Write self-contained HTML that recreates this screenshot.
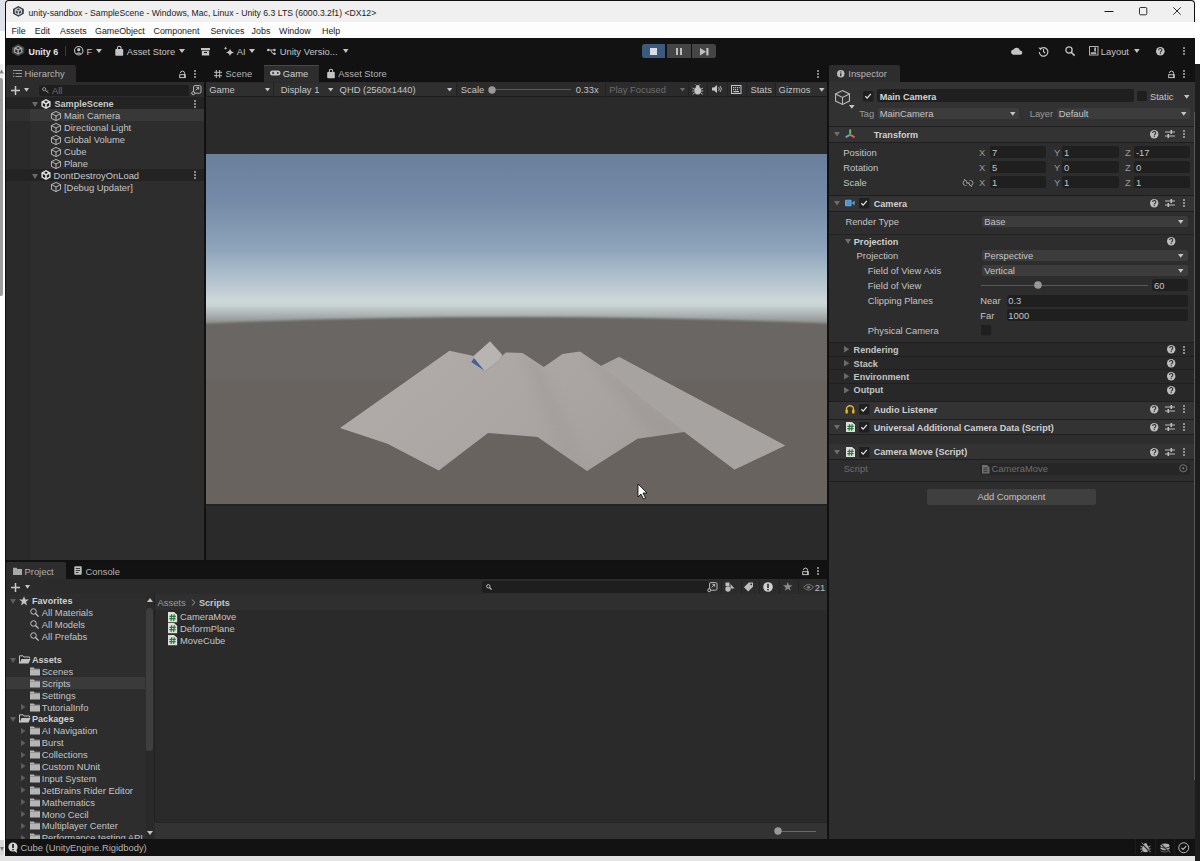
<!DOCTYPE html>
<html><head><meta charset="utf-8"><style>
html,body{margin:0;padding:0;}
body{width:1200px;height:861px;position:relative;overflow:hidden;background:#e6e6e6;font-family:"Liberation Sans",sans-serif;}
.a{position:absolute;}
.t{white-space:nowrap;font-family:"Liberation Sans",sans-serif;}
svg{overflow:visible;}

</style></head><body>
<div class="a" style="left:0px;top:0px;width:1200px;height:861px;background:#e6e6e6;"></div>
<div class="a" style="left:0px;top:0px;width:5px;height:31px;background:#dfe2ea;"></div>
<div class="a" style="left:0px;top:31px;width:5px;height:824px;background:#ffffff;"></div>
<div class="a" style="left:0px;top:64px;width:3px;height:14px;background:#ececec;"></div>
<svg class="a" style="left:0px;top:68.5px;" width="3" height="5" viewBox="0 0 3 5"><path d="M-1 4.5L1.5 0.5L4 4.5Z" fill="#8a8a8a"/></svg>
<div class="a" style="left:0px;top:78px;width:3px;height:218px;background:#9c9c9c;border-radius:0 2px 2px 0"></div>
<div class="a" style="left:0px;top:840px;width:4px;height:15px;background:#d8d8d8;"></div>
<svg class="a" style="left:0px;top:846px;" width="4" height="6" viewBox="0 0 4 6"><path d="M0 1H4L2 5Z" fill="#7a7a7a"/></svg>
<div class="a" style="left:1195px;top:0px;width:5px;height:64px;background:#ffffff;"></div>
<div class="a" style="left:1195px;top:64px;width:5px;height:797px;background:#1d1d1d;"></div>
<div class="a" style="left:0px;top:855px;width:1195px;height:6px;background:#e4e4e4;"></div>
<div class="a" style="left:5px;top:0px;width:1190px;height:855.5px;background:#101010;border-radius:4px 4px 0 0"></div>
<div class="a" style="left:6px;top:1px;width:1188px;height:21px;background:#f0f0f0;border-radius:3px 3px 0 0"></div>
<div class="a" style="left:6px;top:22px;width:1189px;height:16px;background:#fdfdfd;"></div>
<div class="a" style="left:6px;top:38px;width:1189px;height:26px;background:#121212;"></div>
<div class="a" style="left:6px;top:64px;width:1189px;height:18px;background:#121212;"></div>
<svg class="a" style="left:12.6px;top:5.7px;" width="10.8" height="10.8" viewBox="0 0 10.8 10.8"><g transform="scale(1.08)"><path d="M5 0L10 2.75V7.25L5 10L0 7.25V2.75Z" fill="#3a3f47"/><g transform="translate(1.3 1.3) scale(0.74)"><path d="M5 0.1L9.6 2.6V7.4L5 9.9L0.4 7.4V2.6Z" fill="#c8cfd8"/><g fill="#3a3f47"><path d="M5 1.5L6.9 2.7L5 3.9L3.1 2.7Z"/><path d="M1.8 3.9L4.2 5.2V8L1.8 6.7Z"/><path d="M8.2 3.9L5.8 5.2V8L8.2 6.7Z"/></g></g></g></svg>
<div class="a t" style="left:28.5px;top:6.85px;font-size:8.66px;line-height:12px;color:#1c1c1c;">unity-sandbox - SampleScene - Windows, Mac, Linux - Unity 6.3 LTS (6000.3.2f1) &lt;DX12&gt;</div>
<svg class="a" style="left:1104px;top:10px;" width="10" height="3" viewBox="0 0 10 3"><path d="M0.5 1.5H9.5" stroke="#1a1a1a" stroke-width="1"/></svg>
<svg class="a" style="left:1138px;top:6px;" width="10" height="10" viewBox="0 0 10 10"><rect x="1.5" y="1.5" width="7.3" height="7.3" rx="1.2" fill="none" stroke="#1a1a1a" stroke-width="0.9"/></svg>
<svg class="a" style="left:1172px;top:6px;" width="10" height="10" viewBox="0 0 10 10"><path d="M1.3 1.3L8.7 8.7M8.7 1.3L1.3 8.7" stroke="#1a1a1a" stroke-width="0.9"/></svg>
<div class="a t" style="left:11.4px;top:24.65px;font-size:8.9px;line-height:12px;color:#1a1a1a;">File</div>
<div class="a t" style="left:34.8px;top:24.65px;font-size:8.9px;line-height:12px;color:#1a1a1a;">Edit</div>
<div class="a t" style="left:60px;top:24.65px;font-size:8.9px;line-height:12px;color:#1a1a1a;">Assets</div>
<div class="a t" style="left:95px;top:24.65px;font-size:8.9px;line-height:12px;color:#1a1a1a;">GameObject</div>
<div class="a t" style="left:153.5px;top:24.65px;font-size:8.9px;line-height:12px;color:#1a1a1a;">Component</div>
<div class="a t" style="left:210.4px;top:24.65px;font-size:8.9px;line-height:12px;color:#1a1a1a;">Services</div>
<div class="a t" style="left:251.6px;top:24.65px;font-size:8.9px;line-height:12px;color:#1a1a1a;">Jobs</div>
<div class="a t" style="left:279px;top:24.65px;font-size:8.9px;line-height:12px;color:#1a1a1a;">Window</div>
<div class="a t" style="left:322px;top:24.65px;font-size:8.9px;line-height:12px;color:#1a1a1a;">Help</div>
<svg class="a" style="left:12.4px;top:44.2px;" width="12.3" height="12.3" viewBox="0 0 12.3 12.3"><g transform="scale(1.23)"><path d="M5 0L10 2.75V7.25L5 10L0 7.25V2.75Z" fill="#454545"/><g transform="translate(1.3 1.3) scale(0.74)"><path d="M5 0.1L9.6 2.6V7.4L5 9.9L0.4 7.4V2.6Z" fill="#a3a7ac"/><g fill="#2a2a2a"><path d="M5 1.5L6.9 2.7L5 3.9L3.1 2.7Z"/><path d="M1.8 3.9L4.2 5.2V8L1.8 6.7Z"/><path d="M8.2 3.9L5.8 5.2V8L8.2 6.7Z"/></g></g></g></svg>
<div class="a t" style="left:28.5px;top:45.65px;font-size:8.9px;line-height:12px;color:#e6e6e6;font-weight:bold;">Unity 6</div>
<div class="a" style="left:64.5px;top:46px;width:1px;height:10px;background:#3a3a3a;"></div>
<svg class="a" style="left:73.8px;top:46.3px;" width="9.5" height="9.5" viewBox="0 0 9.5 9.5"><circle cx="4.75" cy="4.75" r="4.2" fill="none" stroke="#c4c4c4" stroke-width="1.1"/><circle cx="4.75" cy="3.7" r="1.6" fill="#c4c4c4"/><path d="M1.8 7.8a3.4 2.6 0 0 1 5.9 0" fill="#c4c4c4"/></svg>
<div class="a t" style="left:86.5px;top:45.65px;font-size:9.4px;line-height:12px;color:#c4c4c4;">F</div>
<svg class="a" style="left:96px;top:49px;" width="6" height="4" viewBox="0 0 6 4"><path d="M0 0H6L3.0 4Z" fill="#c4c4c4"/></svg>
<svg class="a" style="left:114.7px;top:45.5px;" width="8.5" height="10" viewBox="0 0 8.5 10"><path d="M2.5 3V2a1.75 1.75 0 0 1 3.5 0V3" fill="none" stroke="#c4c4c4" stroke-width="1.1"/><rect x="0.3" y="3" width="7.9" height="6.7" rx="0.8" fill="#c4c4c4"/></svg>
<div class="a t" style="left:126.7px;top:45.65px;font-size:9.4px;line-height:12px;color:#c4c4c4;">Asset Store</div>
<svg class="a" style="left:179px;top:49px;" width="6" height="4" viewBox="0 0 6 4"><path d="M0 0H6L3.0 4Z" fill="#c4c4c4"/></svg>
<svg class="a" style="left:200.8px;top:47.5px;" width="9" height="7.5" viewBox="0 0 9 7.5"><rect x="0" y="0" width="9" height="2.2" fill="#c4c4c4"/><rect x="0.8" y="2.8" width="7.4" height="4.7" fill="#c4c4c4"/><rect x="3" y="4" width="3" height="1" fill="#121212"/></svg>
<svg class="a" style="left:222px;top:45px;" width="13" height="12" viewBox="0 0 13 12"><path d="M8 3.6Q8.5 6.9 12.2 7.4Q8.5 7.9 8 11.2Q7.5 7.9 3.8 7.4Q7.5 6.9 8 3.6Z" fill="#c4c4c4"/><path d="M3.6 1.5Q3.8 3.1 5.4 3.3Q3.8 3.5 3.6 5.1Q3.4 3.5 1.8 3.3Q3.4 3.1 3.6 1.5Z" fill="#c4c4c4"/></svg>
<div class="a t" style="left:236.7px;top:45.65px;font-size:9.4px;line-height:12px;color:#c4c4c4;">AI</div>
<svg class="a" style="left:249px;top:49px;" width="6" height="4" viewBox="0 0 6 4"><path d="M0 0H6L3.0 4Z" fill="#c4c4c4"/></svg>
<svg class="a" style="left:266.5px;top:47.5px;" width="9" height="7.5" viewBox="0 0 9 7.5"><circle cx="1.3" cy="2" r="1.3" fill="#c4c4c4"/><circle cx="7.5" cy="2" r="1.2" fill="#c4c4c4"/><circle cx="7.5" cy="5.8" r="1.2" fill="#c4c4c4"/><path d="M1.3 2H7.5M3.8 2Q4.3 5.8 7.5 5.8" fill="none" stroke="#c4c4c4" stroke-width="0.9"/></svg>
<div class="a t" style="left:279.7px;top:45.65px;font-size:9.4px;line-height:12px;color:#c4c4c4;">Unity Versio...</div>
<svg class="a" style="left:343px;top:49px;" width="5.5" height="4" viewBox="0 0 5.5 4"><path d="M0 0H5.5L2.75 4Z" fill="#c4c4c4"/></svg>
<div class="a" style="left:641.7px;top:44px;width:23.7px;height:14.4px;background:#3b5a7e;border-radius:2.5px 0 0 2.5px"></div>
<div class="a" style="left:649.8px;top:47.6px;width:7.2px;height:7.4px;background:#dadde2;"></div>
<div class="a" style="left:667px;top:44px;width:23.7px;height:14.4px;background:#454545;"></div>
<div class="a" style="left:675.7px;top:47.6px;width:2.2px;height:7.4px;background:#c0c0c0;"></div>
<div class="a" style="left:679.8px;top:47.6px;width:2.2px;height:7.4px;background:#c0c0c0;"></div>
<div class="a" style="left:692.3px;top:44px;width:23.5px;height:14.4px;background:#454545;border-radius:0 2.5px 2.5px 0"></div>
<svg class="a" style="left:699.8px;top:47.6px;" width="8.5" height="7.4" viewBox="0 0 8.5 7.4"><path d="M0 0L6 3.7L0 7.4Z" fill="#c0c0c0"/><rect x="6.3" y="0" width="2.2" height="7.4" fill="#c0c0c0"/></svg>
<svg class="a" style="left:1010.5px;top:46.5px;" width="11.5" height="8" viewBox="0 0 11.5 8"><path d="M2.8 7.8a2.6 2.6 0 0 1-.3-5.2a3.4 3.4 0 0 1 6.4.8a2.2 2.2 0 0 1 .4 4.4Z" fill="#c4c4c4"/></svg>
<svg class="a" style="left:1037.5px;top:45.8px;" width="11" height="11" viewBox="0 0 11 11"><path d="M2.2 3.2A4.3 4.3 0 1 1 1.3 6" fill="none" stroke="#c4c4c4" stroke-width="1.2"/><path d="M0.4 1.5L2.6 4.3L4.3 1.9Z" fill="#c4c4c4"/><path d="M5.5 3V5.8L7.2 7" fill="none" stroke="#c4c4c4" stroke-width="1.1"/></svg>
<svg class="a" style="left:1064.5px;top:46px;" width="10.5" height="10.5" viewBox="0 0 10.5 10.5"><circle cx="4" cy="4" r="3.1" fill="none" stroke="#c4c4c4" stroke-width="1.3"/><path d="M6.2 6.2L9.6 9.6" stroke="#c4c4c4" stroke-width="1.6"/></svg>
<svg class="a" style="left:1089px;top:46px;" width="9.5" height="9.5" viewBox="0 0 9.5 9.5"><rect x="0.5" y="0.5" width="8.5" height="8.5" fill="none" stroke="#b0b0b0" stroke-width="1"/><rect x="5.3" y="1.5" width="1.6" height="4" fill="#c4c4c4"/><rect x="1.8" y="6.3" width="5.4" height="1.6" fill="#c4c4c4"/></svg>
<div class="a t" style="left:1100.8px;top:45.65px;font-size:9.4px;line-height:12px;color:#c4c4c4;">Layout</div>
<svg class="a" style="left:1134px;top:49px;" width="5.7" height="4" viewBox="0 0 5.7 4"><path d="M0 0H5.7L2.85 4Z" fill="#c4c4c4"/></svg>
<svg class="a" style="left:1155.7px;top:46.7px;" width="8.6" height="8.6" viewBox="0 0 8.6 8.6"><circle cx="4.3" cy="4.3" r="4.3" fill="#c4c4c4"/><path d="M2.6999999999999997 3.1999999999999997a1.6 1.6 0 1 1 2.2 1.4c-.6.3-.6.6-.6 1.1" fill="none" stroke="#2e2e2e" stroke-width="1.1"/><circle cx="4.3" cy="6.699999999999999" r=".65" fill="#2e2e2e"/></svg>
<svg class="a" style="left:1182.5px;top:46px;" width="2" height="10" viewBox="0 0 2 10"><rect x="0.2" y="1.2" width="1.6" height="1.6" fill="#c4c4c4"/><rect x="0.2" y="4.2" width="1.6" height="1.6" fill="#c4c4c4"/><rect x="0.2" y="7.2" width="1.6" height="1.6" fill="#c4c4c4"/></svg>
<div class="a" style="left:6px;top:82px;width:198px;height:478px;background:#2d2d2d;"></div>
<div class="a" style="left:6px;top:82px;width:198px;height:15px;background:#2c2c2c;"></div>
<div class="a" style="left:6px;top:97px;width:24px;height:463px;background:#2a2a2a;"></div>
<div class="a" style="left:6px;top:65px;width:70px;height:17px;background:#2c2c2c;border-radius:2px 2px 0 0"></div>
<svg class="a" style="left:12.5px;top:69.5px;" width="9" height="7.5" viewBox="0 0 9 7.5"><g stroke="#9a9a9a" stroke-width="1"><path d="M0 0.5H9M2.5 3.5H9M2.5 6.5H9"/></g><rect x="0" y="2.8" width="1.2" height="1.2" fill="#9a9a9a"/><rect x="0" y="5.8" width="1.2" height="1.2" fill="#9a9a9a"/></svg>
<div class="a t" style="left:24.5px;top:68.45px;font-size:9.4px;line-height:12px;color:#b4b4b4;">Hierarchy</div>
<svg class="a" style="left:179.0px;top:69.5px;" width="7" height="8" viewBox="0 0 7 8"><path d="M1.4 3.2a2.1 2.1 0 0 1 4.2 0V7.6" fill="none" stroke="#c4c4c4" stroke-width="1"/><rect x="0.7" y="4.7" width="5.6" height="2.9" fill="none" stroke="#c4c4c4" stroke-width="1"/></svg>
<svg class="a" style="left:193.5px;top:68.9px;" width="2" height="10" viewBox="0 0 2 10"><rect x="0.2" y="1.2" width="1.6" height="1.6" fill="#c4c4c4"/><rect x="0.2" y="4.2" width="1.6" height="1.6" fill="#c4c4c4"/><rect x="0.2" y="7.2" width="1.6" height="1.6" fill="#c4c4c4"/></svg>
<svg class="a" style="left:11px;top:85.5px;" width="9" height="9" viewBox="0 0 9 9"><path d="M4.5 0V9M0 4.5H9" stroke="#c8c8c8" stroke-width="1.5"/></svg>
<svg class="a" style="left:23.5px;top:88px;" width="5" height="3.8" viewBox="0 0 5 3.8"><path d="M0 0H5L2.5 3.8Z" fill="#c4c4c4"/></svg>
<div class="a" style="left:38.5px;top:84.5px;width:150.5px;height:11.5px;background:#1e1e1e;border-radius:3px 0 0 3px"></div>
<svg class="a" style="left:41.5px;top:87px;" width="7" height="6" viewBox="0 0 7 6"><circle cx="2.2" cy="2.2" r="1.6" fill="none" stroke="#9a9a9a" stroke-width="1"/><path d="M3.4 3.4L6.5 5.8M5 4.6L5.8 3.6" stroke="#9a9a9a" stroke-width="1"/></svg>
<div class="a t" style="left:52px;top:84.85px;font-size:9.4px;line-height:12px;color:#6e6e6e;">All</div>
<svg class="a" style="left:191px;top:85px;" width="11" height="10" viewBox="0 0 11 10"><rect x="2.6" y="0.6" width="7.4" height="7.6" rx="1.3" fill="none" stroke="#c4c4c4" stroke-width="0.9"/><path d="M4.6 5.4L7.6 2.5M5.4 2.4H7.7V4.7" fill="none" stroke="#c4c4c4" stroke-width="0.9"/><circle cx="2.2" cy="8.2" r="1.5" fill="#2c2c2c" stroke="#c4c4c4" stroke-width="0.9"/></svg>
<div class="a" style="left:6px;top:97px;width:198px;height:12px;background:#232323;"></div>
<svg class="a" style="left:31.5px;top:102px;" width="6" height="5" viewBox="0 0 6 5"><path d="M0 0H6L3.0 5Z" fill="#6a6a6a"/></svg>
<svg class="a" style="left:41px;top:98.5px;" width="10" height="10" viewBox="0 0 10 10"><g transform="scale(1.0)"><path d="M5 0.1L9.6 2.6V7.4L5 9.9L0.4 7.4V2.6Z" fill="#dedede"/><g fill="#1e1e1e"><path d="M5 1.5L6.9 2.7L5 3.9L3.1 2.7Z"/><path d="M1.8 3.9L4.2 5.2V8L1.8 6.7Z"/><path d="M8.2 3.9L5.8 5.2V8L8.2 6.7Z"/></g></g></svg>
<div class="a t" style="left:54.5px;top:98.15px;font-size:9.1px;line-height:12px;color:#c8c8c8;font-weight:bold;">SampleScene</div>
<svg class="a" style="left:194px;top:98.5px;" width="2" height="10" viewBox="0 0 2 10"><rect x="0.2" y="1.2" width="1.6" height="1.6" fill="#c4c4c4"/><rect x="0.2" y="4.2" width="1.6" height="1.6" fill="#c4c4c4"/><rect x="0.2" y="7.2" width="1.6" height="1.6" fill="#c4c4c4"/></svg>
<div class="a" style="left:6px;top:109px;width:198px;height:12px;background:#383838;"></div>
<div class="a" style="left:6px;top:109px;width:24px;height:12px;background:#303030;"></div>
<svg class="a" style="left:51px;top:110.5px;" width="10" height="10" viewBox="0 0 10 10"><g fill="none" stroke="#c4c4c4" stroke-width="0.9" stroke-linejoin="miter"><path d="M5.0 0.45L9.55 2.6V7.4L5.0 9.55L0.45 7.4V2.6Z"/><path d="M0.45 2.6L5.0 5.0L9.55 2.6M5.0 5.0V9.55"/></g></svg>
<div class="a t" style="left:64px;top:110.15px;font-size:9.4px;line-height:12px;color:#c4c4c4;">Main Camera</div>
<svg class="a" style="left:51px;top:122.5px;" width="10" height="10" viewBox="0 0 10 10"><g fill="none" stroke="#c4c4c4" stroke-width="0.9" stroke-linejoin="miter"><path d="M5.0 0.45L9.55 2.6V7.4L5.0 9.55L0.45 7.4V2.6Z"/><path d="M0.45 2.6L5.0 5.0L9.55 2.6M5.0 5.0V9.55"/></g></svg>
<div class="a t" style="left:64px;top:122.15px;font-size:9.4px;line-height:12px;color:#c4c4c4;">Directional Light</div>
<svg class="a" style="left:51px;top:134.5px;" width="10" height="10" viewBox="0 0 10 10"><g fill="none" stroke="#c4c4c4" stroke-width="0.9" stroke-linejoin="miter"><path d="M5.0 0.45L9.55 2.6V7.4L5.0 9.55L0.45 7.4V2.6Z"/><path d="M0.45 2.6L5.0 5.0L9.55 2.6M5.0 5.0V9.55"/></g></svg>
<div class="a t" style="left:64px;top:134.15px;font-size:9.4px;line-height:12px;color:#c4c4c4;">Global Volume</div>
<svg class="a" style="left:51px;top:146.5px;" width="10" height="10" viewBox="0 0 10 10"><g fill="none" stroke="#c4c4c4" stroke-width="0.9" stroke-linejoin="miter"><path d="M5.0 0.45L9.55 2.6V7.4L5.0 9.55L0.45 7.4V2.6Z"/><path d="M0.45 2.6L5.0 5.0L9.55 2.6M5.0 5.0V9.55"/></g></svg>
<div class="a t" style="left:64px;top:146.15px;font-size:9.4px;line-height:12px;color:#c4c4c4;">Cube</div>
<svg class="a" style="left:51px;top:158.5px;" width="10" height="10" viewBox="0 0 10 10"><g fill="none" stroke="#c4c4c4" stroke-width="0.9" stroke-linejoin="miter"><path d="M5.0 0.45L9.55 2.6V7.4L5.0 9.55L0.45 7.4V2.6Z"/><path d="M0.45 2.6L5.0 5.0L9.55 2.6M5.0 5.0V9.55"/></g></svg>
<div class="a t" style="left:64px;top:158.15px;font-size:9.4px;line-height:12px;color:#c4c4c4;">Plane</div>
<div class="a" style="left:6px;top:169px;width:198px;height:12px;background:#232323;"></div>
<svg class="a" style="left:31.5px;top:174px;" width="6" height="5" viewBox="0 0 6 5"><path d="M0 0H6L3.0 5Z" fill="#6a6a6a"/></svg>
<svg class="a" style="left:41px;top:170.3px;" width="10" height="10" viewBox="0 0 10 10"><g transform="scale(1.0)"><path d="M5 0.1L9.6 2.6V7.4L5 9.9L0.4 7.4V2.6Z" fill="#dedede"/><g fill="#1e1e1e"><path d="M5 1.5L6.9 2.7L5 3.9L3.1 2.7Z"/><path d="M1.8 3.9L4.2 5.2V8L1.8 6.7Z"/><path d="M8.2 3.9L5.8 5.2V8L8.2 6.7Z"/></g></g></svg>
<div class="a t" style="left:53.6px;top:169.95px;font-size:9.4px;line-height:12px;color:#c8c8c8;">DontDestroyOnLoad</div>
<svg class="a" style="left:194px;top:170.3px;" width="2" height="10" viewBox="0 0 2 10"><rect x="0.2" y="1.2" width="1.6" height="1.6" fill="#c4c4c4"/><rect x="0.2" y="4.2" width="1.6" height="1.6" fill="#c4c4c4"/><rect x="0.2" y="7.2" width="1.6" height="1.6" fill="#c4c4c4"/></svg>
<svg class="a" style="left:51px;top:182px;" width="10" height="10" viewBox="0 0 10 10"><g fill="none" stroke="#c4c4c4" stroke-width="0.9" stroke-linejoin="miter"><path d="M5.0 0.45L9.55 2.6V7.4L5.0 9.55L0.45 7.4V2.6Z"/><path d="M0.45 2.6L5.0 5.0L9.55 2.6M5.0 5.0V9.55"/></g></svg>
<div class="a t" style="left:64px;top:181.65px;font-size:9.4px;line-height:12px;color:#c4c4c4;">[Debug Updater]</div>
<div class="a" style="left:204px;top:82px;width:2px;height:480px;background:#111111;"></div>
<svg class="a" style="left:213.7px;top:69.5px;" width="8" height="8" viewBox="0 0 8 8"><g stroke="#bdbdbd" stroke-width="1"><path d="M2.3 0V8M5.7 0V8M0 2.3H8M0 5.7H8"/></g></svg>
<div class="a t" style="left:225.6px;top:68.35px;font-size:9.4px;line-height:12px;color:#b4b4b4;">Scene</div>
<div class="a" style="left:263.5px;top:64.5px;width:55px;height:17.5px;background:#2d2d2d;"></div>
<div class="a" style="left:263.5px;top:64.5px;width:55px;height:1px;background:#27507a;"></div>
<svg class="a" style="left:269.7px;top:70.2px;" width="10.5" height="6" viewBox="0 0 10.5 6"><path d="M2.5 0.5H8A2.5 2.5 0 0 1 8 5.5H2.5A2.5 2.5 0 0 1 2.5 0.5Z" fill="#c4c4c4"/><path d="M2 3H4.2M3.1 1.9V4.1" stroke="#2d2d2d" stroke-width="0.9"/><circle cx="7.8" cy="3" r="0.9" fill="#2d2d2d"/></svg>
<div class="a t" style="left:282.7px;top:68.35px;font-size:9.4px;line-height:12px;color:#d0d0d0;">Game</div>
<svg class="a" style="left:326.8px;top:68.5px;" width="8" height="9.5" viewBox="0 0 8 9.5"><path d="M2.3 3V2a1.7 1.7 0 0 1 3.4 0V3" fill="none" stroke="#c4c4c4" stroke-width="1.1"/><rect x="0.2" y="3" width="7.6" height="6.3" rx="0.8" fill="#c4c4c4"/></svg>
<div class="a t" style="left:338.3px;top:68.35px;font-size:9.4px;line-height:12px;color:#b4b4b4;">Asset Store</div>
<svg class="a" style="left:816.6px;top:68.9px;" width="2" height="10" viewBox="0 0 2 10"><rect x="0.2" y="1.2" width="1.6" height="1.6" fill="#c4c4c4"/><rect x="0.2" y="4.2" width="1.6" height="1.6" fill="#c4c4c4"/><rect x="0.2" y="7.2" width="1.6" height="1.6" fill="#c4c4c4"/></svg>
<div class="a" style="left:206px;top:82px;width:621px;height:14.5px;background:#2b2b2b;"></div>
<div class="a" style="left:206px;top:96.3px;width:621px;height:1px;background:#1d1d1d;"></div>
<div class="a" style="left:273.0px;top:82px;width:1px;height:14.5px;background:#222222;"></div>
<div class="a" style="left:336.3px;top:82px;width:1px;height:14.5px;background:#222222;"></div>
<div class="a" style="left:456.2px;top:82px;width:1px;height:14.5px;background:#222222;"></div>
<div class="a" style="left:605.3px;top:82px;width:1px;height:14.5px;background:#222222;"></div>
<div class="a" style="left:687.5px;top:82px;width:1px;height:14.5px;background:#222222;"></div>
<div class="a" style="left:706.8px;top:82px;width:1px;height:14.5px;background:#222222;"></div>
<div class="a" style="left:727.0px;top:82px;width:1px;height:14.5px;background:#222222;"></div>
<div class="a" style="left:746.1px;top:82px;width:1px;height:14.5px;background:#222222;"></div>
<div class="a" style="left:774.9px;top:82px;width:1px;height:14.5px;background:#222222;"></div>
<div class="a" style="left:207px;top:83px;width:66px;height:12.5px;background:#2f2f2f;"></div>
<div class="a t" style="left:209.3px;top:84.15px;font-size:9.4px;line-height:12px;color:#c4c4c4;">Game</div>
<svg class="a" style="left:264.9px;top:87.8px;" width="5" height="3.6" viewBox="0 0 5 3.6"><path d="M0 0H5L2.5 3.6Z" fill="#c4c4c4"/></svg>
<div class="a" style="left:274px;top:83px;width:62.5px;height:12.5px;background:#2f2f2f;"></div>
<div class="a t" style="left:280.8px;top:84.15px;font-size:9.4px;line-height:12px;color:#c4c4c4;">Display 1</div>
<svg class="a" style="left:328px;top:87.8px;" width="5.3" height="3.6" viewBox="0 0 5.3 3.6"><path d="M0 0H5.3L2.65 3.6Z" fill="#c4c4c4"/></svg>
<div class="a" style="left:337.3px;top:83px;width:119px;height:12.5px;background:#2f2f2f;"></div>
<div class="a t" style="left:339.6px;top:84.15px;font-size:9.4px;line-height:12px;color:#c4c4c4;">QHD (2560x1440)</div>
<svg class="a" style="left:446.5px;top:87.8px;" width="5.3" height="3.6" viewBox="0 0 5.3 3.6"><path d="M0 0H5.3L2.65 3.6Z" fill="#c4c4c4"/></svg>
<div class="a t" style="left:460.8px;top:84.15px;font-size:9.4px;line-height:12px;color:#c4c4c4;">Scale</div>
<div class="a" style="left:492px;top:88.8px;width:79px;height:1px;background:#5a5a5a;"></div>
<svg class="a" style="left:488px;top:85.5px;" width="8" height="8" viewBox="0 0 8 8"><circle cx="4" cy="4" r="3.7" fill="#999999"/></svg>
<div class="a t" style="left:575.8px;top:84.15px;font-size:9.4px;line-height:12px;color:#c4c4c4;">0.33x</div>
<div class="a t" style="left:609.2px;top:84.15px;font-size:9.4px;line-height:12px;color:#6c6c6c;">Play Focused</div>
<svg class="a" style="left:679.5px;top:87.8px;" width="5" height="3.6" viewBox="0 0 5 3.6"><path d="M0 0H5L2.5 3.6Z" fill="#6c6c6c"/></svg>
<svg class="a" style="left:692px;top:83.5px;" width="11.5" height="11.5" viewBox="0 0 11.5 11.5"><ellipse cx="5.75" cy="6.6" rx="3.3" ry="3.9" fill="#c4c4c4"/><circle cx="5.75" cy="2.6" r="1.7" fill="#c4c4c4"/><g stroke="#c4c4c4" stroke-width="0.9"><path d="M0.5 4L2.7 5.2M11 4L8.8 5.2M0.3 7H2.5M11.2 7H9M0.8 10.3L2.8 8.8M10.7 10.3L8.7 8.8M3.6 0.5L4.6 1.6M7.9 0.5L6.9 1.6"/></g></svg>
<svg class="a" style="left:712px;top:85px;" width="10" height="8" viewBox="0 0 10 8"><path d="M0 2.5H2L5 0V8L2 5.5H0Z" fill="#c4c4c4"/><path d="M6.5 2.2a2.6 2.6 0 0 1 0 3.6M8 1a4.3 4.3 0 0 1 0 6" fill="none" stroke="#c4c4c4" stroke-width="0.9"/></svg>
<svg class="a" style="left:731.3px;top:84.5px;" width="10.5" height="9" viewBox="0 0 10.5 9"><rect x="0.5" y="0.5" width="9.5" height="8" fill="none" stroke="#c4c4c4" stroke-width="1"/><g fill="#c4c4c4"><rect x="2" y="2" width="1.2" height="1.2"/><rect x="4" y="2" width="1.2" height="1.2"/><rect x="6" y="2" width="1.2" height="1.2"/><rect x="8" y="2" width="0.8" height="1.2"/><rect x="2" y="4" width="1.2" height="1.2"/><rect x="4" y="4" width="1.2" height="1.2"/><rect x="6" y="4" width="1.2" height="1.2"/><rect x="2.5" y="6" width="5.5" height="1.2"/></g></svg>
<div class="a t" style="left:750.5px;top:84.15px;font-size:9.4px;line-height:12px;color:#c4c4c4;">Stats</div>
<div class="a" style="left:776px;top:83px;width:50px;height:12.5px;background:#2f2f2f;"></div>
<div class="a t" style="left:778.6px;top:84.15px;font-size:9.4px;line-height:12px;color:#c4c4c4;">Gizmos</div>
<svg class="a" style="left:818.5px;top:87.8px;" width="5.5" height="3.8" viewBox="0 0 5.5 3.8"><path d="M0 0H5.5L2.75 3.8Z" fill="#c4c4c4"/></svg>
<div class="a" style="left:206px;top:97px;width:621px;height:463px;background:#2a2a2a;"></div>
<svg class="a" style="left:206px;top:154px;overflow:hidden" width="621" height="350" viewBox="0 0 621 350"><defs>
<linearGradient id="sky" x1="0" y1="0" x2="0" y2="1">
<stop offset="0" stop-color="#6a7f9c"/><stop offset="0.132" stop-color="#748aa6"/><stop offset="0.275" stop-color="#8fa5bc"/>
<stop offset="0.332" stop-color="#a7bac8"/><stop offset="0.39" stop-color="#c0ccd4"/><stop offset="0.418" stop-color="#cdd8da"/><stop offset="0.433" stop-color="#c9d3d3"/><stop offset="0.455" stop-color="#b0b8b8"/><stop offset="0.484" stop-color="#8b8f8d"/><stop offset="1" stop-color="#8b8f8d"/>
</linearGradient>
<filter id="hb" x="-10%" y="-50%" width="120%" height="200%"><feGaussianBlur stdDeviation="0.9"/></filter>
<linearGradient id="mesh" x1="0" y1="0" x2="1" y2="0.3">
<stop offset="0" stop-color="#b2adaa"/><stop offset="0.5" stop-color="#aba6a3"/><stop offset="1" stop-color="#a29d9a"/>
</linearGradient>
<filter id="bl"><feGaussianBlur stdDeviation="4"/></filter><clipPath id="mc"><polygon points="134.0,274.0 243.5,196.8 266.5,201.8 279.0,217.0 300.0,198.5 316.5,199.0 337.8,213.0 356.5,200.0 374.0,197.5 395.2,212.0 413.0,203.0 579.0,291.5 528.5,315.5 478.5,278.0 431.5,284.8 381.0,317.0 331.5,283.0 282.0,279.0 232.8,316.5 181.5,289.8"/></clipPath>
</defs>
<rect x="0" y="0" width="621" height="350" fill="url(#sky)"/><g filter="url(#hb)"><ellipse cx="310.5" cy="226" rx="700" ry="63" fill="#6b6663"/><rect x="-30" y="226" width="681" height="150" fill="#696460"/></g>
<polygon points="134.0,274.0 243.5,196.8 266.5,201.8 279.0,217.0 300.0,198.5 316.5,199.0 337.8,213.0 356.5,200.0 374.0,197.5 395.2,212.0 413.0,203.0 579.0,291.5 528.5,315.5 478.5,278.0 431.5,284.8 381.0,317.0 331.5,283.0 282.0,279.0 232.8,316.5 181.5,289.8" fill="url(#mesh)"/>
<g clip-path="url(#mc)"><g filter="url(#bl)" opacity="0.32">
<polygon points="380.0,202.0 395.2,212.0 478.5,278.0 449.0,282.0" fill="#97928f"/>
<polygon points="314.0,199.0 337.8,213.0 381.0,317.0 354.0,298.0" fill="#9d9895"/>
</g></g><polygon points="395.2,212.0 413.0,203.0 579.0,291.5 528.5,315.5 478.5,278.0" fill="#a7a3a0"/>
<polygon points="265.3,208.0 268.0,204.0 280.0,217.8" fill="#44629a"/>
<polygon points="267.0,202.5 284.0,187.2 296.0,200.5 295.0,204.5 279.0,217.5" fill="#b8b4b1"/><path d="M296.0,200.5 295.0,204.5 279.0,217.5" transform="" fill="none" stroke="#a29e9b" stroke-width="0.8"/>
<path d="M432 330V343L435 340L437.5 345L439.5 344L437 339H441Z" fill="#ffffff" stroke="#000" stroke-width="0.8"/>
</svg>
<div class="a" style="left:206px;top:504px;width:621px;height:56px;background:#2a2a2a;"></div>
<div class="a" style="left:206px;top:504px;width:621px;height:1.5px;background:#232323;"></div>
<div class="a" style="left:827px;top:64px;width:2px;height:775px;background:#111111;"></div>
<div class="a" style="left:6px;top:560px;width:821px;height:2px;background:#111111;"></div>
<div class="a" style="left:829px;top:82px;width:366px;height:757px;background:#2d2d2d;"></div>
<div class="a" style="left:829px;top:65px;width:70.5px;height:17px;background:#2d2d2d;border-radius:2px 2px 0 0"></div>
<svg class="a" style="left:837px;top:69.8px;" width="7.5" height="7.5" viewBox="0 0 7.5 7.5"><circle cx="3.75" cy="3.75" r="3.75" fill="#bdbdbd"/><rect x="3.1" y="3.2" width="1.3" height="3" fill="#2d2d2d"/><circle cx="3.75" cy="1.9" r="0.7" fill="#2d2d2d"/></svg>
<div class="a t" style="left:848.3px;top:68.45px;font-size:9.4px;line-height:12px;color:#b4b4b4;">Inspector</div>
<svg class="a" style="left:1167.5px;top:69.5px;" width="7" height="8" viewBox="0 0 7 8"><path d="M1.4 3.2a2.1 2.1 0 0 1 4.2 0V7.6" fill="none" stroke="#c4c4c4" stroke-width="1"/><rect x="0.7" y="4.7" width="5.6" height="2.9" fill="none" stroke="#c4c4c4" stroke-width="1"/></svg>
<svg class="a" style="left:1182.7px;top:68.8px;" width="2" height="10" viewBox="0 0 2 10"><rect x="0.2" y="1.2" width="1.6" height="1.6" fill="#c4c4c4"/><rect x="0.2" y="4.2" width="1.6" height="1.6" fill="#c4c4c4"/><rect x="0.2" y="7.2" width="1.6" height="1.6" fill="#c4c4c4"/></svg>
<div class="a" style="left:829px;top:82px;width:366px;height:44.7px;background:#323232;"></div>
<svg class="a" style="left:834.5px;top:90.2px;" width="15" height="15" viewBox="0 0 15 15"><g fill="none" stroke="#b8b8b8" stroke-width="1.1" stroke-linejoin="miter"><path d="M7.5 0.55L14.45 3.9000000000000004V11.1L7.5 14.45L0.55 11.1V3.9000000000000004Z"/><path d="M0.55 3.9000000000000004L7.5 7.5L14.45 3.9000000000000004M7.5 7.5V14.45"/></g></svg>
<svg class="a" style="left:848.7px;top:104.8px;" width="5.6" height="3.8" viewBox="0 0 5.6 3.8"><path d="M0 0H5.6L2.8 3.8Z" fill="#c4c4c4"/></svg>
<svg class="a" style="left:862.5px;top:91px;" width="10.5" height="10.5" viewBox="0 0 10.5 10.5"><rect x="0" y="0" width="10.5" height="10.5" rx="1.5" fill="#1f1f1f"/><path d="M2.3 5.2L4.2 7.1L7.8 2.9" fill="none" stroke="#e0e0e0" stroke-width="1.3"/></svg>
<div class="a" style="left:877px;top:89px;width:257px;height:12.5px;background:#1f1f1f;border-radius:2px"></div>
<div class="a t" style="left:879.7px;top:90.85px;font-size:9.1px;line-height:12px;color:#d6d6d6;font-weight:bold;">Main Camera</div>
<svg class="a" style="left:1137px;top:90.8px;" width="10" height="10" viewBox="0 0 10 10"><rect x="0" y="0" width="10" height="10" rx="1.5" fill="#1f1f1f"/></svg>
<div class="a t" style="left:1150px;top:90.85px;font-size:9.4px;line-height:12px;color:#c4c4c4;">Static</div>
<svg class="a" style="left:1184px;top:94.5px;" width="5.5" height="3.8" viewBox="0 0 5.5 3.8"><path d="M0 0H5.5L2.75 3.8Z" fill="#c4c4c4"/></svg>
<div class="a t" style="left:859.2px;top:108.35px;font-size:9.4px;line-height:12px;color:#9a9a9a;">Tag</div>
<div class="a" style="left:877.5px;top:108px;width:141.5px;height:11.2px;background:#3c3c3c;border-radius:2px"></div>
<div class="a t" style="left:879.7px;top:108.35px;font-size:9.4px;line-height:12px;color:#c4c4c4;">MainCamera</div>
<svg class="a" style="left:1010px;top:112px;" width="5.5" height="3.8" viewBox="0 0 5.5 3.8"><path d="M0 0H5.5L2.75 3.8Z" fill="#c4c4c4"/></svg>
<div class="a t" style="left:1029.7px;top:108.35px;font-size:9.4px;line-height:12px;color:#9a9a9a;">Layer</div>
<div class="a" style="left:1056.7px;top:108px;width:133.3px;height:11.2px;background:#3c3c3c;border-radius:2px"></div>
<div class="a t" style="left:1058.7px;top:108.35px;font-size:9.4px;line-height:12px;color:#c4c4c4;">Default</div>
<svg class="a" style="left:1181px;top:112px;" width="5.5" height="3.8" viewBox="0 0 5.5 3.8"><path d="M0 0H5.5L2.75 3.8Z" fill="#c4c4c4"/></svg>
<div class="a" style="left:829px;top:126.2px;width:366px;height:1px;background:#1e1e1e;"></div>
<div class="a" style="left:829px;top:127px;width:366px;height:14.699999999999989px;background:#333333;"></div>
<svg class="a" style="left:834px;top:132.15px;" width="6" height="4.5" viewBox="0 0 6 4.5"><path d="M0 0H6L3.0 4.5Z" fill="#6e6e6e"/></svg>
<svg class="a" style="left:845px;top:128.85px;" width="10" height="10" viewBox="0 0 10 10"><g stroke-width="1.9" stroke-linecap="round"><path d="M5.2 4.6V1.2" stroke="#6cc35a"/><path d="M5.8 6.2L8.9 7.9" stroke="#e0654a"/><path d="M4.4 6.2L1.3 7.9" stroke="#5aa3e0"/></g></svg>
<div class="a t" style="left:873.7px;top:129.00px;font-size:9.1px;line-height:12px;color:#d0d0d0;font-weight:bold;">Transform</div>
<svg class="a" style="left:1150.3999999999999px;top:130.15px;" width="8.4" height="8.4" viewBox="0 0 8.4 8.4"><circle cx="4.2" cy="4.2" r="4.2" fill="#bdbdbd"/><path d="M2.6 3.1a1.6 1.6 0 1 1 2.2 1.4c-.6.3-.6.6-.6 1.1" fill="none" stroke="#2e2e2e" stroke-width="1.1"/><circle cx="4.2" cy="6.6" r=".65" fill="#2e2e2e"/></svg>
<svg class="a" style="left:1164.5px;top:129.35px;" width="10" height="10" viewBox="0 0 10 10"><g stroke="#bdbdbd" stroke-width="1.1"><path d="M0 3H10M0 7H10"/></g><rect x="5.5" y="1" width="1.6" height="4" fill="#bdbdbd"/><rect x="2.5" y="5" width="1.6" height="4" fill="#bdbdbd"/></svg>
<svg class="a" style="left:1183.3px;top:129.35px;" width="2" height="10" viewBox="0 0 2 10"><rect x="0.2" y="1.2" width="1.6" height="1.6" fill="#c4c4c4"/><rect x="0.2" y="4.2" width="1.6" height="1.6" fill="#c4c4c4"/><rect x="0.2" y="7.2" width="1.6" height="1.6" fill="#c4c4c4"/></svg>
<div class="a" style="left:829px;top:141.7px;width:366px;height:1px;background:#1e1e1e;"></div>
<div class="a t" style="left:843.3px;top:146.85px;font-size:9.4px;line-height:12px;color:#c4c4c4;">Position</div>
<div class="a t" style="left:979px;top:146.85px;font-size:9.4px;line-height:12px;color:#9a9a9a;">X</div>
<div class="a" style="left:990px;top:145.89999999999998px;width:56px;height:12.6px;background:#1f1f1f;border-radius:2px"></div>
<div class="a t" style="left:992px;top:146.85px;font-size:9.4px;line-height:12px;color:#c4c4c4;">7</div>
<div class="a t" style="left:1054px;top:146.85px;font-size:9.4px;line-height:12px;color:#9a9a9a;">Y</div>
<div class="a" style="left:1062px;top:145.89999999999998px;width:56.7px;height:12.6px;background:#1f1f1f;border-radius:2px"></div>
<div class="a t" style="left:1064px;top:146.85px;font-size:9.4px;line-height:12px;color:#c4c4c4;">1</div>
<div class="a t" style="left:1125px;top:146.85px;font-size:9.4px;line-height:12px;color:#9a9a9a;">Z</div>
<div class="a" style="left:1134px;top:145.89999999999998px;width:56px;height:12.6px;background:#1f1f1f;border-radius:2px"></div>
<div class="a t" style="left:1136px;top:146.85px;font-size:9.4px;line-height:12px;color:#c4c4c4;">-17</div>
<div class="a t" style="left:843.3px;top:161.85px;font-size:9.4px;line-height:12px;color:#c4c4c4;">Rotation</div>
<div class="a t" style="left:979px;top:161.85px;font-size:9.4px;line-height:12px;color:#9a9a9a;">X</div>
<div class="a" style="left:990px;top:160.89999999999998px;width:56px;height:12.6px;background:#1f1f1f;border-radius:2px"></div>
<div class="a t" style="left:992px;top:161.85px;font-size:9.4px;line-height:12px;color:#c4c4c4;">5</div>
<div class="a t" style="left:1054px;top:161.85px;font-size:9.4px;line-height:12px;color:#9a9a9a;">Y</div>
<div class="a" style="left:1062px;top:160.89999999999998px;width:56.7px;height:12.6px;background:#1f1f1f;border-radius:2px"></div>
<div class="a t" style="left:1064px;top:161.85px;font-size:9.4px;line-height:12px;color:#c4c4c4;">0</div>
<div class="a t" style="left:1125px;top:161.85px;font-size:9.4px;line-height:12px;color:#9a9a9a;">Z</div>
<div class="a" style="left:1134px;top:160.89999999999998px;width:56px;height:12.6px;background:#1f1f1f;border-radius:2px"></div>
<div class="a t" style="left:1136px;top:161.85px;font-size:9.4px;line-height:12px;color:#c4c4c4;">0</div>
<div class="a t" style="left:843.3px;top:176.85px;font-size:9.4px;line-height:12px;color:#c4c4c4;">Scale</div>
<div class="a t" style="left:979px;top:176.85px;font-size:9.4px;line-height:12px;color:#9a9a9a;">X</div>
<div class="a" style="left:990px;top:175.89999999999998px;width:56px;height:12.6px;background:#1f1f1f;border-radius:2px"></div>
<div class="a t" style="left:992px;top:176.85px;font-size:9.4px;line-height:12px;color:#c4c4c4;">1</div>
<div class="a t" style="left:1054px;top:176.85px;font-size:9.4px;line-height:12px;color:#9a9a9a;">Y</div>
<div class="a" style="left:1062px;top:175.89999999999998px;width:56.7px;height:12.6px;background:#1f1f1f;border-radius:2px"></div>
<div class="a t" style="left:1064px;top:176.85px;font-size:9.4px;line-height:12px;color:#c4c4c4;">1</div>
<div class="a t" style="left:1125px;top:176.85px;font-size:9.4px;line-height:12px;color:#9a9a9a;">Z</div>
<div class="a" style="left:1134px;top:175.89999999999998px;width:56px;height:12.6px;background:#1f1f1f;border-radius:2px"></div>
<div class="a t" style="left:1136px;top:176.85px;font-size:9.4px;line-height:12px;color:#c4c4c4;">1</div>
<svg class="a" style="left:962.5px;top:178.5px;" width="10" height="8" viewBox="0 0 10 8"><path d="M3.5 1.5H2.5a2.5 2.5 0 0 0 0 5H3.5M6.5 1.5H7.5a2.5 2.5 0 0 1 0 5H6.5M3 4H7" fill="none" stroke="#9a9a9a" stroke-width="1"/><path d="M1 0L9 8" stroke="#9a9a9a" stroke-width="1"/></svg>
<div class="a" style="left:829px;top:195px;width:366px;height:0.8px;background:#1e1e1e;"></div>
<div class="a" style="left:829px;top:195.5px;width:366px;height:15.5px;background:#333333;"></div>
<svg class="a" style="left:834px;top:201.05px;" width="6" height="4.5" viewBox="0 0 6 4.5"><path d="M0 0H6L3.0 4.5Z" fill="#6e6e6e"/></svg>
<svg class="a" style="left:845.4px;top:199.25px;" width="10" height="8" viewBox="0 0 10 8"><rect x="0" y="0.8" width="6.6" height="6.4" rx="1" fill="#5aa7e0"/><path d="M6.8 4L9.6 1.5V6.5Z" fill="#5aa7e0"/><path d="M1.3 2.3H5.2M1.3 4H5.2M1.3 5.7H5.2" stroke="#2f6fa8" stroke-width="0.5"/></svg>
<svg class="a" style="left:858.7px;top:198.05px;" width="10.4" height="10.4" viewBox="0 0 10.4 10.4"><rect x="0" y="0" width="10.4" height="10.4" rx="1.5" fill="#1f1f1f"/><path d="M2.3 5.2L4.2 7.1L7.8 2.9" fill="none" stroke="#e0e0e0" stroke-width="1.3"/></svg>
<div class="a t" style="left:873.7px;top:197.90px;font-size:9.1px;line-height:12px;color:#d0d0d0;font-weight:bold;">Camera</div>
<svg class="a" style="left:1150.3999999999999px;top:199.05px;" width="8.4" height="8.4" viewBox="0 0 8.4 8.4"><circle cx="4.2" cy="4.2" r="4.2" fill="#bdbdbd"/><path d="M2.6 3.1a1.6 1.6 0 1 1 2.2 1.4c-.6.3-.6.6-.6 1.1" fill="none" stroke="#2e2e2e" stroke-width="1.1"/><circle cx="4.2" cy="6.6" r=".65" fill="#2e2e2e"/></svg>
<svg class="a" style="left:1164.5px;top:198.25px;" width="10" height="10" viewBox="0 0 10 10"><g stroke="#bdbdbd" stroke-width="1.1"><path d="M0 3H10M0 7H10"/></g><rect x="5.5" y="1" width="1.6" height="4" fill="#bdbdbd"/><rect x="2.5" y="5" width="1.6" height="4" fill="#bdbdbd"/></svg>
<svg class="a" style="left:1183.3px;top:198.25px;" width="2" height="10" viewBox="0 0 2 10"><rect x="0.2" y="1.2" width="1.6" height="1.6" fill="#c4c4c4"/><rect x="0.2" y="4.2" width="1.6" height="1.6" fill="#c4c4c4"/><rect x="0.2" y="7.2" width="1.6" height="1.6" fill="#c4c4c4"/></svg>
<div class="a" style="left:829px;top:211px;width:366px;height:1px;background:#1e1e1e;"></div>
<div class="a t" style="left:845.4px;top:216.15px;font-size:9.4px;line-height:12px;color:#c4c4c4;">Render Type</div>
<div class="a" style="left:981.7px;top:215.70000000000002px;width:206.0px;height:11.2px;background:#3c3c3c;border-radius:2px"></div>
<div class="a t" style="left:984.2px;top:215.95px;font-size:9.4px;line-height:12px;color:#c4c4c4;">Base</div>
<svg class="a" style="left:1178.2px;top:219.5px;" width="5.5" height="3.8" viewBox="0 0 5.5 3.8"><path d="M0 0H5.5L2.75 3.8Z" fill="#c4c4c4"/></svg>
<div class="a" style="left:829px;top:234px;width:366px;height:1px;background:#232323;"></div>
<svg class="a" style="left:845.2px;top:238.5px;" width="6.2" height="5" viewBox="0 0 6.2 5"><path d="M0 0H6.2L3.1 5Z" fill="#6e6e6e"/></svg>
<div class="a t" style="left:853.8px;top:235.65px;font-size:9.1px;line-height:12px;color:#d0d0d0;font-weight:bold;">Projection</div>
<svg class="a" style="left:1166.8px;top:236.8px;" width="8.4" height="8.4" viewBox="0 0 8.4 8.4"><circle cx="4.2" cy="4.2" r="4.2" fill="#bdbdbd"/><path d="M2.6 3.1a1.6 1.6 0 1 1 2.2 1.4c-.6.3-.6.6-.6 1.1" fill="none" stroke="#2e2e2e" stroke-width="1.1"/><circle cx="4.2" cy="6.6" r=".65" fill="#2e2e2e"/></svg>
<div class="a t" style="left:856.6px;top:250.25px;font-size:9.4px;line-height:12px;color:#c4c4c4;">Projection</div>
<div class="a" style="left:981.7px;top:250.0px;width:206.0px;height:11.2px;background:#3c3c3c;border-radius:2px"></div>
<div class="a t" style="left:984.2px;top:250.25px;font-size:9.4px;line-height:12px;color:#c4c4c4;">Perspective</div>
<svg class="a" style="left:1178.2px;top:253.79999999999998px;" width="5.5" height="3.8" viewBox="0 0 5.5 3.8"><path d="M0 0H5.5L2.75 3.8Z" fill="#c4c4c4"/></svg>
<div class="a t" style="left:867.8px;top:265.15px;font-size:9.4px;line-height:12px;color:#c4c4c4;">Field of View Axis</div>
<div class="a" style="left:981.7px;top:264.9px;width:206.0px;height:11.2px;background:#3c3c3c;border-radius:2px"></div>
<div class="a t" style="left:984.2px;top:265.15px;font-size:9.4px;line-height:12px;color:#c4c4c4;">Vertical</div>
<svg class="a" style="left:1178.2px;top:268.7px;" width="5.5" height="3.8" viewBox="0 0 5.5 3.8"><path d="M0 0H5.5L2.75 3.8Z" fill="#c4c4c4"/></svg>
<div class="a t" style="left:867.8px;top:279.95px;font-size:9.4px;line-height:12px;color:#c4c4c4;">Field of View</div>
<div class="a" style="left:981px;top:284.8px;width:167px;height:1px;background:#5a5a5a;"></div>
<svg class="a" style="left:1034px;top:281.4px;" width="8" height="8" viewBox="0 0 8 8"><circle cx="4" cy="4" r="3.8" fill="#999999"/></svg>
<div class="a" style="left:1152px;top:279.4px;width:36px;height:12px;background:#1f1f1f;border-radius:2px"></div>
<div class="a t" style="left:1154px;top:279.95px;font-size:9.4px;line-height:12px;color:#c4c4c4;">60</div>
<div class="a t" style="left:867.8px;top:294.85px;font-size:9.4px;line-height:12px;color:#c4c4c4;">Clipping Planes</div>
<div class="a t" style="left:980.2px;top:294.85px;font-size:9.4px;line-height:12px;color:#c4c4c4;">Near</div>
<div class="a" style="left:1006.5px;top:294.6px;width:181.5px;height:12px;background:#1f1f1f;border-radius:2px"></div>
<div class="a t" style="left:1008.3px;top:295.05px;font-size:9.4px;line-height:12px;color:#c4c4c4;">0.3</div>
<div class="a t" style="left:980.2px;top:309.65px;font-size:9.4px;line-height:12px;color:#c4c4c4;">Far</div>
<div class="a" style="left:1006.5px;top:308.8px;width:181.5px;height:12.2px;background:#1f1f1f;border-radius:2px"></div>
<div class="a t" style="left:1008.3px;top:309.65px;font-size:9.4px;line-height:12px;color:#c4c4c4;">1000</div>
<div class="a t" style="left:867.8px;top:324.65px;font-size:9.4px;line-height:12px;color:#c4c4c4;">Physical Camera</div>
<svg class="a" style="left:980.8px;top:324.5px;" width="10.2" height="10.2" viewBox="0 0 10.2 10.2"><rect x="0" y="0" width="10.2" height="10.2" rx="1.5" fill="#1f1f1f"/></svg>
<div class="a" style="left:829px;top:341.8px;width:366px;height:1px;background:#1e1e1e;"></div>
<div class="a" style="left:829px;top:342.8px;width:366px;height:58.6px;background:#282828;"></div>
<svg class="a" style="left:844.2px;top:346.40000000000003px;" width="5.4" height="6.4" viewBox="0 0 5.4 6.4"><path d="M0 0L5.4 3.2L0 6.4Z" fill="#6a6a6a"/></svg>
<div class="a t" style="left:853.6px;top:344.25px;font-size:9.1px;line-height:12px;color:#c4c4c4;font-weight:bold;">Rendering</div>
<svg class="a" style="left:1166.8px;top:345.40000000000003px;" width="8.4" height="8.4" viewBox="0 0 8.4 8.4"><circle cx="4.2" cy="4.2" r="4.2" fill="#bdbdbd"/><path d="M2.6 3.1a1.6 1.6 0 1 1 2.2 1.4c-.6.3-.6.6-.6 1.1" fill="none" stroke="#2e2e2e" stroke-width="1.1"/><circle cx="4.2" cy="6.6" r=".65" fill="#2e2e2e"/></svg>
<svg class="a" style="left:1183.3px;top:344.6px;" width="2" height="10" viewBox="0 0 2 10"><rect x="0.2" y="1.2" width="1.6" height="1.6" fill="#c4c4c4"/><rect x="0.2" y="4.2" width="1.6" height="1.6" fill="#c4c4c4"/><rect x="0.2" y="7.2" width="1.6" height="1.6" fill="#c4c4c4"/></svg>
<div class="a" style="left:829px;top:355.90000000000003px;width:366px;height:0.9px;background:#1f1f1f;"></div>
<svg class="a" style="left:844.2px;top:359.8px;" width="5.4" height="6.4" viewBox="0 0 5.4 6.4"><path d="M0 0L5.4 3.2L0 6.4Z" fill="#6a6a6a"/></svg>
<div class="a t" style="left:853.6px;top:357.65px;font-size:9.1px;line-height:12px;color:#c4c4c4;font-weight:bold;">Stack</div>
<svg class="a" style="left:1166.8px;top:358.8px;" width="8.4" height="8.4" viewBox="0 0 8.4 8.4"><circle cx="4.2" cy="4.2" r="4.2" fill="#bdbdbd"/><path d="M2.6 3.1a1.6 1.6 0 1 1 2.2 1.4c-.6.3-.6.6-.6 1.1" fill="none" stroke="#2e2e2e" stroke-width="1.1"/><circle cx="4.2" cy="6.6" r=".65" fill="#2e2e2e"/></svg>
<div class="a" style="left:829px;top:369.3px;width:366px;height:0.9px;background:#1f1f1f;"></div>
<svg class="a" style="left:844.2px;top:373.20000000000005px;" width="5.4" height="6.4" viewBox="0 0 5.4 6.4"><path d="M0 0L5.4 3.2L0 6.4Z" fill="#6a6a6a"/></svg>
<div class="a t" style="left:853.6px;top:371.05px;font-size:9.1px;line-height:12px;color:#c4c4c4;font-weight:bold;">Environment</div>
<svg class="a" style="left:1166.8px;top:372.20000000000005px;" width="8.4" height="8.4" viewBox="0 0 8.4 8.4"><circle cx="4.2" cy="4.2" r="4.2" fill="#bdbdbd"/><path d="M2.6 3.1a1.6 1.6 0 1 1 2.2 1.4c-.6.3-.6.6-.6 1.1" fill="none" stroke="#2e2e2e" stroke-width="1.1"/><circle cx="4.2" cy="6.6" r=".65" fill="#2e2e2e"/></svg>
<div class="a" style="left:829px;top:382.70000000000005px;width:366px;height:0.9px;background:#1f1f1f;"></div>
<svg class="a" style="left:844.2px;top:386.6px;" width="5.4" height="6.4" viewBox="0 0 5.4 6.4"><path d="M0 0L5.4 3.2L0 6.4Z" fill="#6a6a6a"/></svg>
<div class="a t" style="left:853.6px;top:384.45px;font-size:9.1px;line-height:12px;color:#c4c4c4;font-weight:bold;">Output</div>
<svg class="a" style="left:1166.8px;top:385.6px;" width="8.4" height="8.4" viewBox="0 0 8.4 8.4"><circle cx="4.2" cy="4.2" r="4.2" fill="#bdbdbd"/><path d="M2.6 3.1a1.6 1.6 0 1 1 2.2 1.4c-.6.3-.6.6-.6 1.1" fill="none" stroke="#2e2e2e" stroke-width="1.1"/><circle cx="4.2" cy="6.6" r=".65" fill="#2e2e2e"/></svg>
<div class="a" style="left:829px;top:401.4px;width:366px;height:1px;background:#1e1e1e;"></div>
<div class="a" style="left:829px;top:402.2px;width:366px;height:16.600000000000023px;background:#333333;"></div>
<svg class="a" style="left:844.8px;top:404.3px;" width="10" height="10" viewBox="0 0 10 10"><path d="M1.5 7V5.2a3.5 3.5 0 0 1 7 0V7" fill="none" stroke="#e8b52a" stroke-width="1.4"/><rect x="0.5" y="5.8" width="2.4" height="3.6" rx="0.6" fill="#e8b52a"/><rect x="7.1" y="5.8" width="2.4" height="3.6" rx="0.6" fill="#e8b52a"/></svg>
<svg class="a" style="left:858.7px;top:404.1px;" width="10.4" height="10.4" viewBox="0 0 10.4 10.4"><rect x="0" y="0" width="10.4" height="10.4" rx="1.5" fill="#1f1f1f"/><path d="M2.3 5.2L4.2 7.1L7.8 2.9" fill="none" stroke="#e0e0e0" stroke-width="1.3"/></svg>
<div class="a t" style="left:873.7px;top:403.95px;font-size:9.1px;line-height:12px;color:#d0d0d0;font-weight:bold;">Audio Listener</div>
<svg class="a" style="left:1150.3999999999999px;top:405.1px;" width="8.4" height="8.4" viewBox="0 0 8.4 8.4"><circle cx="4.2" cy="4.2" r="4.2" fill="#bdbdbd"/><path d="M2.6 3.1a1.6 1.6 0 1 1 2.2 1.4c-.6.3-.6.6-.6 1.1" fill="none" stroke="#2e2e2e" stroke-width="1.1"/><circle cx="4.2" cy="6.6" r=".65" fill="#2e2e2e"/></svg>
<svg class="a" style="left:1164.5px;top:404.3px;" width="10" height="10" viewBox="0 0 10 10"><g stroke="#bdbdbd" stroke-width="1.1"><path d="M0 3H10M0 7H10"/></g><rect x="5.5" y="1" width="1.6" height="4" fill="#bdbdbd"/><rect x="2.5" y="5" width="1.6" height="4" fill="#bdbdbd"/></svg>
<svg class="a" style="left:1183.3px;top:404.3px;" width="2" height="10" viewBox="0 0 2 10"><rect x="0.2" y="1.2" width="1.6" height="1.6" fill="#c4c4c4"/><rect x="0.2" y="4.2" width="1.6" height="1.6" fill="#c4c4c4"/><rect x="0.2" y="7.2" width="1.6" height="1.6" fill="#c4c4c4"/></svg>
<div class="a" style="left:829px;top:418.8px;width:366px;height:1px;background:#1e1e1e;"></div>
<div class="a" style="left:829px;top:419.8px;width:366px;height:14.399999999999977px;background:#333333;"></div>
<svg class="a" style="left:834px;top:424.8px;" width="6" height="4.5" viewBox="0 0 6 4.5"><path d="M0 0H6L3.0 4.5Z" fill="#6e6e6e"/></svg>
<svg class="a" style="left:845.5px;top:422.0px;" width="9.0" height="10" viewBox="0 0 9.0 10"><path d="M0 0H5.94L9.0 2.6V10H0Z" fill="#dde0db"/><g stroke="#2a7a38" stroke-width="1.2"><path d="M3.6 2.2L3.06 8.8M6.12 2.2L5.58 8.8M1.44 4.3H7.74M1.2600000000000002 6.6000000000000005H7.56"/></g></svg>
<svg class="a" style="left:858.7px;top:421.8px;" width="10.4" height="10.4" viewBox="0 0 10.4 10.4"><rect x="0" y="0" width="10.4" height="10.4" rx="1.5" fill="#1f1f1f"/><path d="M2.3 5.2L4.2 7.1L7.8 2.9" fill="none" stroke="#e0e0e0" stroke-width="1.3"/></svg>
<div class="a t" style="left:873.7px;top:421.65px;font-size:9.1px;line-height:12px;color:#d0d0d0;font-weight:bold;">Universal Additional Camera Data (Script)</div>
<svg class="a" style="left:1150.3999999999999px;top:422.8px;" width="8.4" height="8.4" viewBox="0 0 8.4 8.4"><circle cx="4.2" cy="4.2" r="4.2" fill="#bdbdbd"/><path d="M2.6 3.1a1.6 1.6 0 1 1 2.2 1.4c-.6.3-.6.6-.6 1.1" fill="none" stroke="#2e2e2e" stroke-width="1.1"/><circle cx="4.2" cy="6.6" r=".65" fill="#2e2e2e"/></svg>
<svg class="a" style="left:1164.5px;top:422.0px;" width="10" height="10" viewBox="0 0 10 10"><g stroke="#bdbdbd" stroke-width="1.1"><path d="M0 3H10M0 7H10"/></g><rect x="5.5" y="1" width="1.6" height="4" fill="#bdbdbd"/><rect x="2.5" y="5" width="1.6" height="4" fill="#bdbdbd"/></svg>
<svg class="a" style="left:1183.3px;top:422.0px;" width="2" height="10" viewBox="0 0 2 10"><rect x="0.2" y="1.2" width="1.6" height="1.6" fill="#c4c4c4"/><rect x="0.2" y="4.2" width="1.6" height="1.6" fill="#c4c4c4"/><rect x="0.2" y="7.2" width="1.6" height="1.6" fill="#c4c4c4"/></svg>
<div class="a" style="left:829px;top:434.2px;width:366px;height:1px;background:#1e1e1e;"></div>
<div class="a" style="left:829px;top:435px;width:366px;height:8.5px;background:#2d2d2d;"></div>
<div class="a" style="left:829px;top:443.5px;width:366px;height:1px;background:#1e1e1e;"></div>
<div class="a" style="left:829px;top:444.3px;width:366px;height:15.0px;background:#333333;"></div>
<svg class="a" style="left:834px;top:449.6px;" width="6" height="4.5" viewBox="0 0 6 4.5"><path d="M0 0H6L3.0 4.5Z" fill="#6e6e6e"/></svg>
<svg class="a" style="left:845.5px;top:446.8px;" width="9.0" height="10" viewBox="0 0 9.0 10"><path d="M0 0H5.94L9.0 2.6V10H0Z" fill="#dde0db"/><g stroke="#2a7a38" stroke-width="1.2"><path d="M3.6 2.2L3.06 8.8M6.12 2.2L5.58 8.8M1.44 4.3H7.74M1.2600000000000002 6.6000000000000005H7.56"/></g></svg>
<svg class="a" style="left:858.7px;top:446.6px;" width="10.4" height="10.4" viewBox="0 0 10.4 10.4"><rect x="0" y="0" width="10.4" height="10.4" rx="1.5" fill="#1f1f1f"/><path d="M2.3 5.2L4.2 7.1L7.8 2.9" fill="none" stroke="#e0e0e0" stroke-width="1.3"/></svg>
<div class="a t" style="left:873.7px;top:446.45px;font-size:9.1px;line-height:12px;color:#d0d0d0;font-weight:bold;">Camera Move (Script)</div>
<svg class="a" style="left:1150.3999999999999px;top:447.6px;" width="8.4" height="8.4" viewBox="0 0 8.4 8.4"><circle cx="4.2" cy="4.2" r="4.2" fill="#bdbdbd"/><path d="M2.6 3.1a1.6 1.6 0 1 1 2.2 1.4c-.6.3-.6.6-.6 1.1" fill="none" stroke="#2e2e2e" stroke-width="1.1"/><circle cx="4.2" cy="6.6" r=".65" fill="#2e2e2e"/></svg>
<svg class="a" style="left:1164.5px;top:446.8px;" width="10" height="10" viewBox="0 0 10 10"><g stroke="#bdbdbd" stroke-width="1.1"><path d="M0 3H10M0 7H10"/></g><rect x="5.5" y="1" width="1.6" height="4" fill="#bdbdbd"/><rect x="2.5" y="5" width="1.6" height="4" fill="#bdbdbd"/></svg>
<svg class="a" style="left:1183.3px;top:446.8px;" width="2" height="10" viewBox="0 0 2 10"><rect x="0.2" y="1.2" width="1.6" height="1.6" fill="#c4c4c4"/><rect x="0.2" y="4.2" width="1.6" height="1.6" fill="#c4c4c4"/><rect x="0.2" y="7.2" width="1.6" height="1.6" fill="#c4c4c4"/></svg>
<div class="a" style="left:829px;top:459.3px;width:366px;height:1px;background:#1e1e1e;"></div>
<div class="a t" style="left:843.8px;top:463.35px;font-size:9.4px;line-height:12px;color:#6e6e6e;">Script</div>
<div class="a" style="left:979.6px;top:462.6px;width:210.4px;height:12.2px;background:#262626;border-radius:2px"></div>
<svg class="a" style="left:981.7px;top:464.5px;" width="7.5" height="8.5" viewBox="0 0 7.5 8.5"><path d="M0 0H5L7.5 2.5V8.5H0Z" fill="#6e6e6e"/><path d="M1.5 3H5.5M1.5 4.8H5.5M1.5 6.6H5.5" stroke="#262626" stroke-width="0.7"/></svg>
<div class="a t" style="left:991.6px;top:463.35px;font-size:9.4px;line-height:12px;color:#6e6e6e;">CameraMove</div>
<svg class="a" style="left:1179.2px;top:464.4px;" width="8.6" height="8.6" viewBox="0 0 8.6 8.6"><circle cx="4.3" cy="4.3" r="3.6" fill="none" stroke="#7a7a7a" stroke-width="0.9"/><circle cx="4.3" cy="4.3" r="1.1" fill="#7a7a7a"/></svg>
<div class="a" style="left:829px;top:481px;width:366px;height:1px;background:#1e1e1e;"></div>
<div class="a" style="left:926.8px;top:489.2px;width:169.2px;height:15.5px;background:#3f3f3f;border-radius:2px"></div>
<div class="a t" style="left:926.8px;top:490.85px;font-size:9.4px;line-height:12px;color:#c4c4c4;width:169.2px;text-align:center">Add Component</div>
<div class="a" style="left:1193.8px;top:111.5px;width:1.2px;height:668.5px;background:#5a5a5a;"></div>
<div class="a" style="left:6px;top:562px;width:821px;height:17px;background:#121212;"></div>
<div class="a" style="left:6px;top:562px;width:60px;height:17px;background:#2d2d2d;border-radius:2px 2px 0 0"></div>
<svg class="a" style="left:12.5px;top:566.5px;" width="9" height="8" viewBox="0 0 9 8"><path d="M0 0.8H3.5L4.5 2H9V8H0Z" fill="#a8a8a8"/></svg>
<div class="a t" style="left:24.5px;top:565.65px;font-size:9.4px;line-height:12px;color:#b0b0b0;">Project</div>
<svg class="a" style="left:74px;top:566px;" width="8" height="9" viewBox="0 0 8 9"><rect x="0.3" y="0.3" width="7.4" height="8.4" rx="0.8" fill="#bdbdbd"/><path d="M1.8 2.5H6M1.8 4.5H6M1.8 6.5H4.5" stroke="#191919" stroke-width="0.8"/></svg>
<div class="a t" style="left:85.5px;top:565.65px;font-size:9.4px;line-height:12px;color:#b4b4b4;">Console</div>
<svg class="a" style="left:801.5px;top:566.8px;" width="7" height="8" viewBox="0 0 7 8"><path d="M1.4 3.2a2.1 2.1 0 0 1 4.2 0V7.6" fill="none" stroke="#c4c4c4" stroke-width="1"/><rect x="0.7" y="4.7" width="5.6" height="2.9" fill="none" stroke="#c4c4c4" stroke-width="1"/></svg>
<svg class="a" style="left:816.8px;top:565.5px;" width="2" height="10" viewBox="0 0 2 10"><rect x="0.2" y="1.2" width="1.6" height="1.6" fill="#c4c4c4"/><rect x="0.2" y="4.2" width="1.6" height="1.6" fill="#c4c4c4"/><rect x="0.2" y="7.2" width="1.6" height="1.6" fill="#c4c4c4"/></svg>
<div class="a" style="left:6px;top:579px;width:821px;height:15px;background:#2b2b2b;"></div>
<div class="a" style="left:6px;top:593.6px;width:821px;height:0.8px;background:#1c1c1c;"></div>
<svg class="a" style="left:11px;top:582.5px;" width="9" height="9" viewBox="0 0 9 9"><path d="M4.5 0V9M0 4.5H9" stroke="#c8c8c8" stroke-width="1.5"/></svg>
<svg class="a" style="left:24.5px;top:585.2px;" width="5" height="3.8" viewBox="0 0 5 3.8"><path d="M0 0H5L2.5 3.8Z" fill="#c4c4c4"/></svg>
<div class="a" style="left:482px;top:581px;width:226.5px;height:11.5px;background:#1e1e1e;border-radius:3px"></div>
<svg class="a" style="left:485.5px;top:584px;" width="6" height="6" viewBox="0 0 6 6"><circle cx="2.3" cy="2.3" r="1.7" fill="none" stroke="#bdbdbd" stroke-width="1"/><path d="M3.5 3.5L5.6 5.6" stroke="#bdbdbd" stroke-width="1.2"/></svg>
<svg class="a" style="left:707px;top:582px;" width="11" height="10" viewBox="0 0 11 10"><rect x="2.6" y="0.6" width="7.4" height="7.6" rx="1.3" fill="none" stroke="#c4c4c4" stroke-width="0.9"/><path d="M4.6 5.4L7.6 2.5M5.4 2.4H7.7V4.7" fill="none" stroke="#c4c4c4" stroke-width="0.9"/><circle cx="2.2" cy="8.2" r="1.5" fill="#2b2b2b" stroke="#c4c4c4" stroke-width="0.9"/></svg>
<div class="a" style="left:720.5px;top:579.5px;width:1px;height:14px;background:#232323;"></div>
<div class="a" style="left:740.5px;top:579.5px;width:1px;height:14px;background:#232323;"></div>
<div class="a" style="left:759px;top:579.5px;width:1px;height:14px;background:#232323;"></div>
<div class="a" style="left:779px;top:579.5px;width:1px;height:14px;background:#232323;"></div>
<div class="a" style="left:798px;top:579.5px;width:1px;height:14px;background:#232323;"></div>
<svg class="a" style="left:725px;top:581.5px;" width="10" height="10" viewBox="0 0 10 10"><rect x="0.5" y="0.5" width="4" height="3.5" fill="#bdbdbd"/><circle cx="3" cy="7" r="2.7" fill="#bdbdbd"/><path d="M5.5 2L9.5 6.5H5.5Z" fill="#bdbdbd"/></svg>
<svg class="a" style="left:744px;top:582px;" width="9.5" height="9.5" viewBox="0 0 9.5 9.5"><path d="M4.8 0.5H9V4.7L4.2 9.5L0 5.3Z" fill="#bdbdbd"/><circle cx="7.2" cy="2.3" r="0.9" fill="#2b2b2b"/></svg>
<svg class="a" style="left:763px;top:581.8px;" width="10" height="10" viewBox="0 0 10 10"><circle cx="5" cy="5" r="4.8" fill="#d0d0d0"/><rect x="4.2" y="1.8" width="1.6" height="4.2" fill="#2b2b2b"/><circle cx="5" cy="7.6" r="0.9" fill="#2b2b2b"/></svg>
<svg class="a" style="left:783px;top:582.3px;" width="9.5" height="9" viewBox="0 0 9.5 9"><path d="M4.75 0L6 3.3H9.5L6.7 5.4L7.7 8.8L4.75 6.7L1.8 8.8L2.8 5.4L0 3.3H3.5Z" fill="#8a8a8a"/></svg>
<svg class="a" style="left:802.5px;top:583.8px;" width="11" height="6.5" viewBox="0 0 11 6.5"><path d="M0.5 3.25Q5.5 -2.5 10.5 3.25Q5.5 9 0.5 3.25Z" fill="none" stroke="#7a7a7a" stroke-width="0.9"/><circle cx="5.5" cy="3.25" r="1.6" fill="#7a7a7a"/></svg>
<div class="a t" style="left:814.8px;top:581.65px;font-size:9.4px;line-height:12px;color:#bdbdbd;">21</div>
<div class="a" style="left:6px;top:594.4px;width:821px;height:244.6px;background:#2d2d2d;"></div>
<div class="a" style="left:6px;top:594.4px;width:139px;height:244.6px;background:#2d2d2d;"></div>
<div class="a" style="left:145.5px;top:594.4px;width:8px;height:244.6px;background:#2a2a2a;"></div>
<svg class="a" style="left:146.5px;top:597.5px;" width="6" height="5" viewBox="0 0 6 5"><path d="M0 4H6L3 0Z" fill="#c4c4c4"/></svg>
<div class="a" style="left:146.2px;top:607.5px;width:7px;height:143px;background:#3e3e3e;border-radius:3.5px"></div>
<svg class="a" style="left:146.5px;top:830.5px;" width="6" height="5" viewBox="0 0 6 5"><path d="M0 0H6L3 4Z" fill="#c4c4c4"/></svg>
<div class="a" style="left:154.3px;top:594.4px;width:1px;height:228px;background:#222222;"></div>
<svg class="a" style="left:9.5px;top:598.8px;" width="6" height="5" viewBox="0 0 6 5"><path d="M0 0H6L3.0 5Z" fill="#5e5e5e"/></svg>
<svg class="a" style="left:19px;top:596px;" width="10" height="10" viewBox="0 0 10 10"><path d="M5 0.3L6.3 3.6H9.8L7 5.8L8 9.5L5 7.3L2 9.5L3 5.8L0.2 3.6H3.7Z" fill="#c4c4c4"/></svg>
<div class="a t" style="left:32px;top:594.65px;font-size:9.1px;line-height:12px;color:#d0d0d0;font-weight:bold;">Favorites</div>
<svg class="a" style="left:29.5px;top:608.1px;" width="9" height="9" viewBox="0 0 9 9"><circle cx="3.5" cy="3.5" r="2.8" fill="none" stroke="#c4c4c4" stroke-width="1"/><path d="M5.5 5.5L8.6 8.6" stroke="#c4c4c4" stroke-width="1.3"/></svg>
<div class="a t" style="left:41.8px;top:607.25px;font-size:9.4px;line-height:12px;color:#c4c4c4;">All Materials</div>
<svg class="a" style="left:29.5px;top:620.0px;" width="9" height="9" viewBox="0 0 9 9"><circle cx="3.5" cy="3.5" r="2.8" fill="none" stroke="#c4c4c4" stroke-width="1"/><path d="M5.5 5.5L8.6 8.6" stroke="#c4c4c4" stroke-width="1.3"/></svg>
<div class="a t" style="left:41.8px;top:619.15px;font-size:9.4px;line-height:12px;color:#c4c4c4;">All Models</div>
<svg class="a" style="left:29.5px;top:631.9px;" width="9" height="9" viewBox="0 0 9 9"><circle cx="3.5" cy="3.5" r="2.8" fill="none" stroke="#c4c4c4" stroke-width="1"/><path d="M5.5 5.5L8.6 8.6" stroke="#c4c4c4" stroke-width="1.3"/></svg>
<div class="a t" style="left:41.8px;top:631.05px;font-size:9.4px;line-height:12px;color:#c4c4c4;">All Prefabs</div>
<svg class="a" style="left:9.5px;top:657.5px;" width="6" height="5" viewBox="0 0 6 5"><path d="M0 0H6L3.0 5Z" fill="#5e5e5e"/></svg>
<svg class="a" style="left:19px;top:655px;" width="12" height="9" viewBox="0 0 12 9"><path d="M0.5 8.5V0.8H4L5 2H10.5V3.5" fill="none" stroke="#c4c4c4" stroke-width="1"/><path d="M0.5 8.5L2.5 4H11.5L9.5 8.5Z" fill="#c4c4c4"/></svg>
<div class="a t" style="left:32px;top:654.25px;font-size:9.1px;line-height:12px;color:#d0d0d0;font-weight:bold;">Assets</div>
<div class="a" style="left:6px;top:677.4px;width:139px;height:11.6px;background:#3a3a3a;"></div>
<svg class="a" style="left:29.5px;top:666.9px;" width="10" height="8.5" viewBox="0 0 10 8.5"><path d="M0 0.5H3.8L4.8 1.7H10V8.5H0Z" fill="#b5b5b5"/><rect x="0" y="2.3" width="10" height="0.7" fill="#2d2d2d" opacity="0.35"/></svg>
<div class="a t" style="left:41.8px;top:666.05px;font-size:9.4px;line-height:12px;color:#c4c4c4;">Scenes</div>
<svg class="a" style="left:29.5px;top:678.8px;" width="10" height="8.5" viewBox="0 0 10 8.5"><path d="M0 0.5H3.8L4.8 1.7H10V8.5H0Z" fill="#b5b5b5"/><rect x="0" y="2.3" width="10" height="0.7" fill="#2d2d2d" opacity="0.35"/></svg>
<div class="a t" style="left:41.8px;top:677.95px;font-size:9.4px;line-height:12px;color:#c4c4c4;">Scripts</div>
<svg class="a" style="left:29.5px;top:690.6999999999999px;" width="10" height="8.5" viewBox="0 0 10 8.5"><path d="M0 0.5H3.8L4.8 1.7H10V8.5H0Z" fill="#b5b5b5"/><rect x="0" y="2.3" width="10" height="0.7" fill="#2d2d2d" opacity="0.35"/></svg>
<div class="a t" style="left:41.8px;top:689.85px;font-size:9.4px;line-height:12px;color:#c4c4c4;">Settings</div>
<svg class="a" style="left:29.5px;top:702.6px;" width="10" height="8.5" viewBox="0 0 10 8.5"><path d="M0 0.5H3.8L4.8 1.7H10V8.5H0Z" fill="#b5b5b5"/><rect x="0" y="2.3" width="10" height="0.7" fill="#2d2d2d" opacity="0.35"/></svg>
<div class="a t" style="left:41.8px;top:701.75px;font-size:9.4px;line-height:12px;color:#c4c4c4;">TutorialInfo</div>
<svg class="a" style="left:20.5px;top:704px;" width="4.5" height="6" viewBox="0 0 4.5 6"><path d="M0 0L4.5 3.0L0 6Z" fill="#5e5e5e"/></svg>
<svg class="a" style="left:9.5px;top:716.5px;" width="6" height="5" viewBox="0 0 6 5"><path d="M0 0H6L3.0 5Z" fill="#5e5e5e"/></svg>
<svg class="a" style="left:19px;top:714.2px;" width="12" height="9" viewBox="0 0 12 9"><path d="M0.5 8.5V0.8H4L5 2H10.5V3.5" fill="none" stroke="#c4c4c4" stroke-width="1"/><path d="M0.5 8.5L2.5 4H11.5L9.5 8.5Z" fill="#c4c4c4"/></svg>
<div class="a t" style="left:32px;top:713.35px;font-size:9.1px;line-height:12px;color:#d0d0d0;font-weight:bold;">Packages</div>
<svg class="a" style="left:20.5px;top:727.8px;" width="4.5" height="6" viewBox="0 0 4.5 6"><path d="M0 0L4.5 3.0L0 6Z" fill="#5e5e5e"/></svg>
<svg class="a" style="left:29.5px;top:726.3px;" width="10" height="8.5" viewBox="0 0 10 8.5"><path d="M0 0.5H3.8L4.8 1.7H10V8.5H0Z" fill="#b5b5b5"/><rect x="0" y="2.3" width="10" height="0.7" fill="#2d2d2d" opacity="0.35"/></svg>
<div class="a t" style="left:41.8px;top:725.45px;font-size:9.4px;line-height:12px;color:#c4c4c4;">AI Navigation</div>
<svg class="a" style="left:20.5px;top:739.68px;" width="4.5" height="6" viewBox="0 0 4.5 6"><path d="M0 0L4.5 3.0L0 6Z" fill="#5e5e5e"/></svg>
<svg class="a" style="left:29.5px;top:738.18px;" width="10" height="8.5" viewBox="0 0 10 8.5"><path d="M0 0.5H3.8L4.8 1.7H10V8.5H0Z" fill="#b5b5b5"/><rect x="0" y="2.3" width="10" height="0.7" fill="#2d2d2d" opacity="0.35"/></svg>
<div class="a t" style="left:41.8px;top:737.33px;font-size:9.4px;line-height:12px;color:#c4c4c4;">Burst</div>
<svg class="a" style="left:20.5px;top:751.56px;" width="4.5" height="6" viewBox="0 0 4.5 6"><path d="M0 0L4.5 3.0L0 6Z" fill="#5e5e5e"/></svg>
<svg class="a" style="left:29.5px;top:750.06px;" width="10" height="8.5" viewBox="0 0 10 8.5"><path d="M0 0.5H3.8L4.8 1.7H10V8.5H0Z" fill="#b5b5b5"/><rect x="0" y="2.3" width="10" height="0.7" fill="#2d2d2d" opacity="0.35"/></svg>
<div class="a t" style="left:41.8px;top:749.21px;font-size:9.4px;line-height:12px;color:#c4c4c4;">Collections</div>
<svg class="a" style="left:20.5px;top:763.4399999999999px;" width="4.5" height="6" viewBox="0 0 4.5 6"><path d="M0 0L4.5 3.0L0 6Z" fill="#5e5e5e"/></svg>
<svg class="a" style="left:29.5px;top:761.9399999999999px;" width="10" height="8.5" viewBox="0 0 10 8.5"><path d="M0 0.5H3.8L4.8 1.7H10V8.5H0Z" fill="#b5b5b5"/><rect x="0" y="2.3" width="10" height="0.7" fill="#2d2d2d" opacity="0.35"/></svg>
<div class="a t" style="left:41.8px;top:761.09px;font-size:9.4px;line-height:12px;color:#c4c4c4;">Custom NUnit</div>
<svg class="a" style="left:20.5px;top:775.3199999999999px;" width="4.5" height="6" viewBox="0 0 4.5 6"><path d="M0 0L4.5 3.0L0 6Z" fill="#5e5e5e"/></svg>
<svg class="a" style="left:29.5px;top:773.8199999999999px;" width="10" height="8.5" viewBox="0 0 10 8.5"><path d="M0 0.5H3.8L4.8 1.7H10V8.5H0Z" fill="#b5b5b5"/><rect x="0" y="2.3" width="10" height="0.7" fill="#2d2d2d" opacity="0.35"/></svg>
<div class="a t" style="left:41.8px;top:772.97px;font-size:9.4px;line-height:12px;color:#c4c4c4;">Input System</div>
<svg class="a" style="left:20.5px;top:787.1999999999999px;" width="4.5" height="6" viewBox="0 0 4.5 6"><path d="M0 0L4.5 3.0L0 6Z" fill="#5e5e5e"/></svg>
<svg class="a" style="left:29.5px;top:785.6999999999999px;" width="10" height="8.5" viewBox="0 0 10 8.5"><path d="M0 0.5H3.8L4.8 1.7H10V8.5H0Z" fill="#b5b5b5"/><rect x="0" y="2.3" width="10" height="0.7" fill="#2d2d2d" opacity="0.35"/></svg>
<div class="a t" style="left:41.8px;top:784.85px;font-size:9.4px;line-height:12px;color:#c4c4c4;">JetBrains Rider Editor</div>
<svg class="a" style="left:20.5px;top:799.0799999999999px;" width="4.5" height="6" viewBox="0 0 4.5 6"><path d="M0 0L4.5 3.0L0 6Z" fill="#5e5e5e"/></svg>
<svg class="a" style="left:29.5px;top:797.5799999999999px;" width="10" height="8.5" viewBox="0 0 10 8.5"><path d="M0 0.5H3.8L4.8 1.7H10V8.5H0Z" fill="#b5b5b5"/><rect x="0" y="2.3" width="10" height="0.7" fill="#2d2d2d" opacity="0.35"/></svg>
<div class="a t" style="left:41.8px;top:796.73px;font-size:9.4px;line-height:12px;color:#c4c4c4;">Mathematics</div>
<svg class="a" style="left:20.5px;top:810.9599999999999px;" width="4.5" height="6" viewBox="0 0 4.5 6"><path d="M0 0L4.5 3.0L0 6Z" fill="#5e5e5e"/></svg>
<svg class="a" style="left:29.5px;top:809.4599999999999px;" width="10" height="8.5" viewBox="0 0 10 8.5"><path d="M0 0.5H3.8L4.8 1.7H10V8.5H0Z" fill="#b5b5b5"/><rect x="0" y="2.3" width="10" height="0.7" fill="#2d2d2d" opacity="0.35"/></svg>
<div class="a t" style="left:41.8px;top:808.61px;font-size:9.4px;line-height:12px;color:#c4c4c4;">Mono Cecil</div>
<svg class="a" style="left:20.5px;top:822.8399999999999px;" width="4.5" height="6" viewBox="0 0 4.5 6"><path d="M0 0L4.5 3.0L0 6Z" fill="#5e5e5e"/></svg>
<svg class="a" style="left:29.5px;top:821.3399999999999px;" width="10" height="8.5" viewBox="0 0 10 8.5"><path d="M0 0.5H3.8L4.8 1.7H10V8.5H0Z" fill="#b5b5b5"/><rect x="0" y="2.3" width="10" height="0.7" fill="#2d2d2d" opacity="0.35"/></svg>
<div class="a t" style="left:41.8px;top:820.49px;font-size:9.4px;line-height:12px;color:#c4c4c4;">Multiplayer Center</div>
<svg class="a" style="left:20.5px;top:834.7199999999999px;" width="4.5" height="6" viewBox="0 0 4.5 6"><path d="M0 0L4.5 3.0L0 6Z" fill="#5e5e5e"/></svg>
<svg class="a" style="left:29.5px;top:833.2199999999999px;" width="10" height="8.5" viewBox="0 0 10 8.5"><path d="M0 0.5H3.8L4.8 1.7H10V8.5H0Z" fill="#b5b5b5"/><rect x="0" y="2.3" width="10" height="0.7" fill="#2d2d2d" opacity="0.35"/></svg>
<div class="a t" style="left:41.8px;top:832.37px;font-size:9.4px;line-height:12px;color:#c4c4c4;">Performance testing API</div>
<div class="a" style="left:155.3px;top:594.4px;width:671.7px;height:228px;background:#2a2a2a;"></div>
<div class="a" style="left:155.3px;top:594.4px;width:671.7px;height:15.6px;background:#2f2f2f;"></div>
<div class="a t" style="left:157.5px;top:596.65px;font-size:9.4px;line-height:12px;color:#9a9a9a;">Assets</div>
<svg class="a" style="left:190.5px;top:598.5px;" width="5" height="7" viewBox="0 0 5 7"><path d="M0.8 0.5L4 3.5L0.8 6.5" fill="none" stroke="#9a9a9a" stroke-width="1"/></svg>
<div class="a t" style="left:199px;top:596.65px;font-size:9.1px;line-height:12px;color:#c8c8c8;font-weight:bold;">Scripts</div>
<svg class="a" style="left:168px;top:611.5px;" width="9.18" height="10.2" viewBox="0 0 9.18 10.2"><path d="M0 0H6.0588L9.18 2.6519999999999997V10.2H0Z" fill="#dde0db"/><g stroke="#2a7a38" stroke-width="1.224"><path d="M3.672 2.2439999999999998L3.1212 8.975999999999999M6.2424 2.2439999999999998L5.6916 8.975999999999999M1.4687999999999999 4.385999999999999H7.8948M1.2852000000000001 6.732H7.7112"/></g></svg>
<div class="a t" style="left:180px;top:611.15px;font-size:9.4px;line-height:12px;color:#c4c4c4;">CameraMove</div>
<svg class="a" style="left:168px;top:623.3px;" width="9.18" height="10.2" viewBox="0 0 9.18 10.2"><path d="M0 0H6.0588L9.18 2.6519999999999997V10.2H0Z" fill="#dde0db"/><g stroke="#2a7a38" stroke-width="1.224"><path d="M3.672 2.2439999999999998L3.1212 8.975999999999999M6.2424 2.2439999999999998L5.6916 8.975999999999999M1.4687999999999999 4.385999999999999H7.8948M1.2852000000000001 6.732H7.7112"/></g></svg>
<div class="a t" style="left:180px;top:622.95px;font-size:9.4px;line-height:12px;color:#c4c4c4;">DeformPlane</div>
<svg class="a" style="left:168px;top:635.1px;" width="9.18" height="10.2" viewBox="0 0 9.18 10.2"><path d="M0 0H6.0588L9.18 2.6519999999999997V10.2H0Z" fill="#dde0db"/><g stroke="#2a7a38" stroke-width="1.224"><path d="M3.672 2.2439999999999998L3.1212 8.975999999999999M6.2424 2.2439999999999998L5.6916 8.975999999999999M1.4687999999999999 4.385999999999999H7.8948M1.2852000000000001 6.732H7.7112"/></g></svg>
<div class="a t" style="left:180px;top:634.75px;font-size:9.4px;line-height:12px;color:#c4c4c4;">MoveCube</div>
<div class="a" style="left:155.3px;top:822.7px;width:671.7px;height:16px;background:#333333;"></div>
<div class="a" style="left:155.3px;top:822.2px;width:671.7px;height:0.8px;background:#262626;"></div>
<div class="a" style="left:779px;top:830.5px;width:37px;height:1px;background:#6a6a6a;"></div>
<svg class="a" style="left:774px;top:826.8px;" width="8" height="8" viewBox="0 0 8 8"><circle cx="4" cy="4" r="3.7" fill="#999999"/></svg>
<div class="a" style="left:6px;top:839px;width:1189px;height:16.5px;background:#121212;"></div>
<svg class="a" style="left:8px;top:842px;" width="10" height="11" viewBox="0 0 10 11"><circle cx="5" cy="5" r="4.6" fill="#d6d6d6"/><path d="M6.5 9.2L9.2 10.9L8.4 7.6Z" fill="#d6d6d6"/><rect x="4.2" y="2" width="1.6" height="4" fill="#121212"/><circle cx="5" cy="7.6" r="0.85" fill="#121212"/></svg>
<div class="a t" style="left:20.6px;top:842.15px;font-size:9.4px;line-height:12px;color:#b4b4b4;">Cube (UnityEngine.Rigidbody)</div>
<svg class="a" style="left:1140px;top:842px;" width="11" height="11" viewBox="0 0 11 11"><ellipse cx="5.5" cy="6.5" rx="3.3" ry="3.8" fill="#b0b0b0"/><circle cx="5.5" cy="2.6" r="1.6" fill="#b0b0b0"/><g stroke="#b0b0b0" stroke-width="0.9"><path d="M0.5 4L2.5 5.2M10.5 4L8.5 5.2M0.3 7H2.3M10.7 7H8.7M0.8 10.3L2.7 8.8M10.2 10.3L8.3 8.8"/></g><path d="M1 0.5L10.5 10.5" stroke="#121212" stroke-width="1.6"/><path d="M1.5 0.5L10.5 10" stroke="#b0b0b0" stroke-width="0.8"/></svg>
<svg class="a" style="left:1159.5px;top:842.5px;" width="10.5" height="10" viewBox="0 0 10.5 10"><ellipse cx="5" cy="2.5" rx="4.5" ry="2" fill="#b0b0b0"/><path d="M0.5 4.2Q5 7 9.5 4.2V6Q5 8.6 0.5 6Z" fill="#b0b0b0"/><path d="M0.5 7.5Q5 10.2 9.5 7.5V8Q5 10.5 0.5 8Z" fill="#b0b0b0"/><path d="M1.5 1L10 10" stroke="#121212" stroke-width="1.3"/><path d="M2 1L10 9.5" stroke="#b0b0b0" stroke-width="0.7"/></svg>
<svg class="a" style="left:1177.5px;top:841.5px;" width="11.5" height="11.5" viewBox="0 0 11.5 11.5"><circle cx="5.75" cy="5.75" r="5" fill="none" stroke="#b8b8b8" stroke-width="1"/><path d="M3.4 5.9L5.1 7.5L8.2 4.2" fill="none" stroke="#b8b8b8" stroke-width="1.2"/></svg>
<div class="a" style="left:1134.5px;top:839px;width:0.8px;height:16px;background:#1c1c1c;"></div>
<div class="a" style="left:1154.5px;top:839px;width:0.8px;height:16px;background:#1c1c1c;"></div>
<div class="a" style="left:1173.5px;top:839px;width:0.8px;height:16px;background:#1c1c1c;"></div>
</body></html>
